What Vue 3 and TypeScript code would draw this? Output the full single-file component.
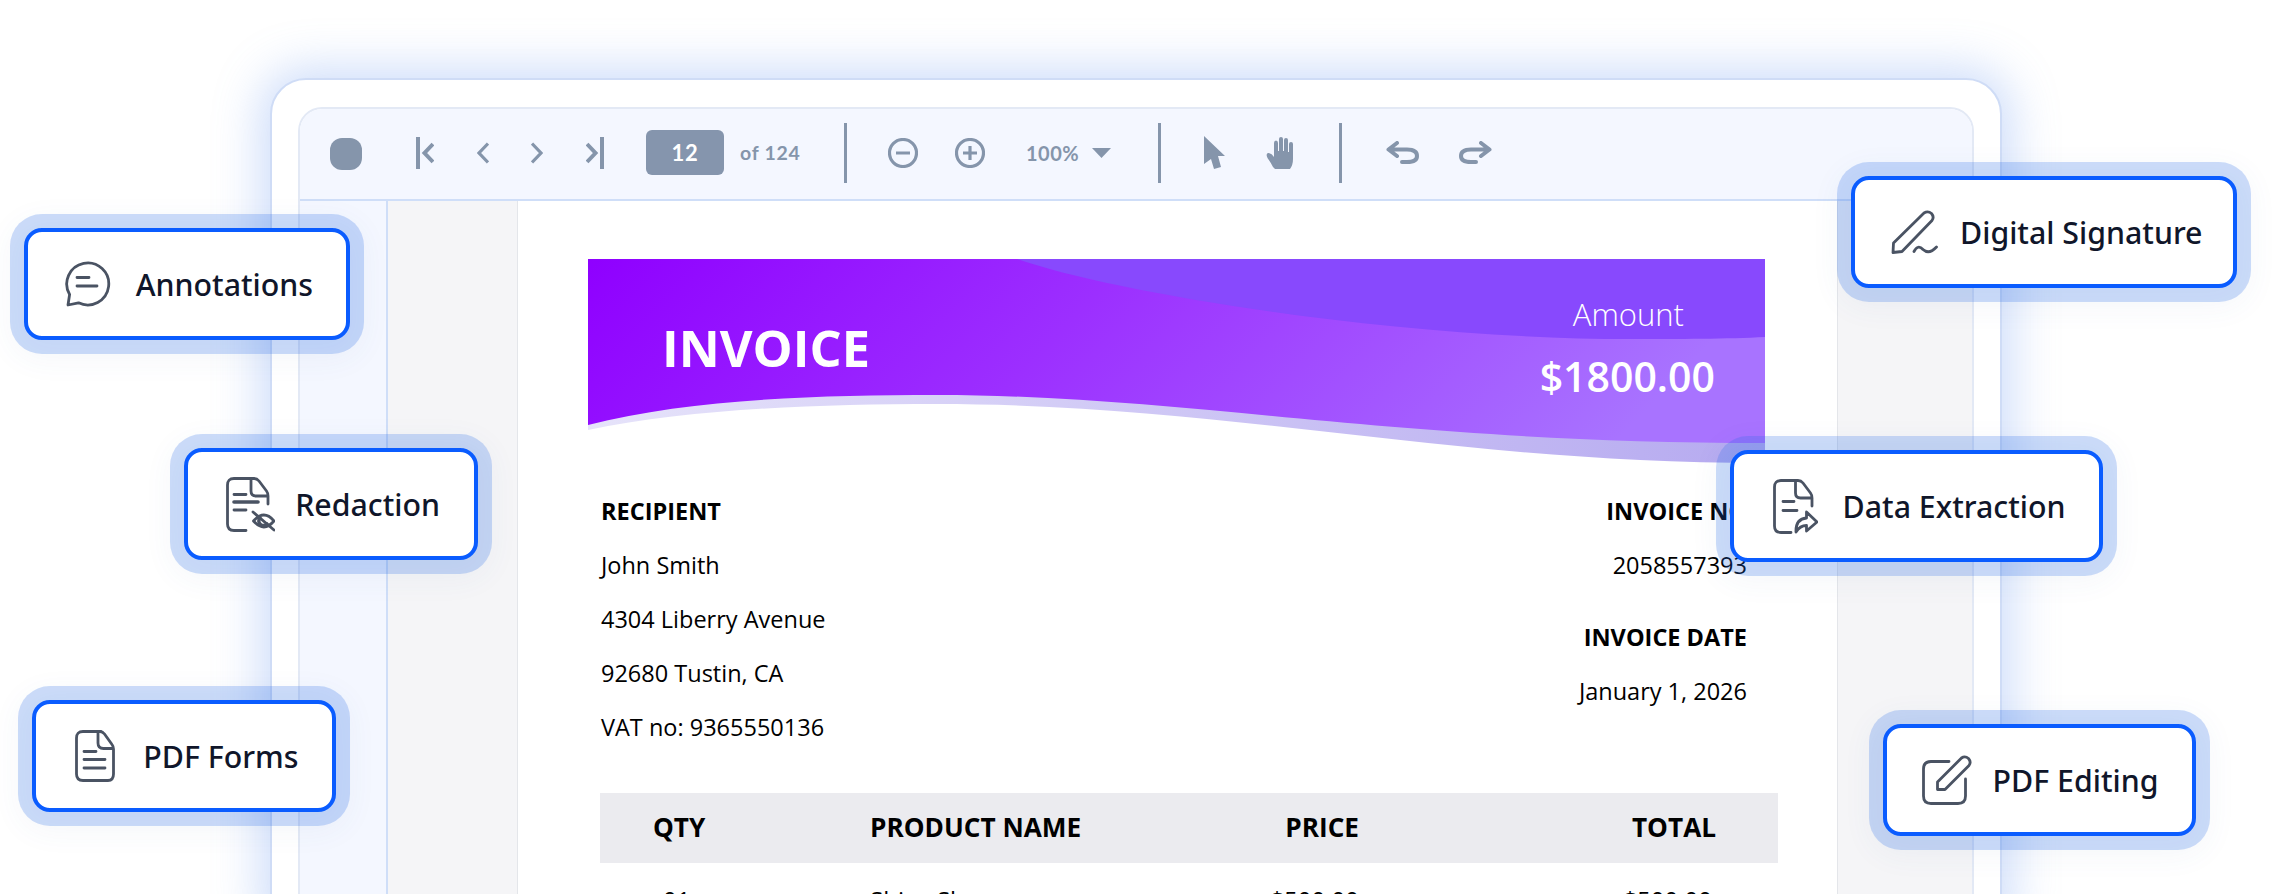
<script setup lang="ts">
interface Shape { d: string; w?: number }
interface Chip {
  label: string; left: number; top: number; width: number; pad: number; gap: number;
  icon: { w: number; h: number; paths: Shape[] };
}
const docBody = 'M27 1.5H8Q1.5 1.5 1.5 8V47Q1.5 53.5 8 53.5H20';
const chips: Chip[] = [
  { label: 'Annotations', left: 24, top: 228, width: 326, pad: 33, gap: 25, icon: { w: 46, h: 46, paths: [
    { d: 'M3 44L4.6 33.500A21 21 0 1 1 13.500 41.800Z' }, { d: 'M12 16.500H24M12 25H32' } ] } },
  { label: 'Redaction', left: 184, top: 448, width: 294, pad: 34, gap: 20, icon: { w: 49, h: 55, paths: [
    { d: docBody }, { d: 'M25 1.500V14Q25 19 30 19H42V27M25 1.500H28Q31 1.500 33 4L40.500 14Q42 16 42 19' },
    { d: 'M8 17.500H20M8 33H20' }, { d: 'M8 25H32', w: 3.6 },
    { d: 'M27.500 44Q38 32 48 44Q38 56 27.500 44Z' }, { d: 'M27 35L48 53' }, { d: 'M34 41A4.500 4.500 0 0 0 41 47', w: 3.6 } ] } },
  { label: 'PDF Forms', left: 32, top: 700, width: 304, pad: 33.5, gap: 28, icon: { w: 40, h: 52, paths: [
    { d: 'M26 1.500H8Q1.500 1.500 1.500 8V44Q1.500 50.500 8 50.500H33Q38.500 50.500 38.500 44V19Q38.500 16.500 37 14.500L29.500 4Q27.500 1.500 25 1.500M23 2V13Q23 18.500 28.500 18.500H38' },
    { d: 'M9 21.500H21M9 29.500H30M9 38H30' } ] } },
  { label: 'Digital Signature', left: 1851, top: 176, width: 386, pad: 30.5, gap: 22, icon: { w: 47, h: 45, paths: [
    { d: 'M2 42.500L2.500 33L33 3Q37 .5 40.500 3.500Q43.500 7 41 10.500L11 41.500Z' }, { d: 'M23 41.500Q27 34 32 39.500Q38 45 45.500 37' } ] } },
  { label: 'Data Extraction', left: 1730, top: 450, width: 373, pad: 33.5, gap: 25, icon: { w: 45, h: 55, paths: [
    { d: 'M22 1.500H8Q1.500 1.500 1.500 8V47Q1.500 53.500 8 53.500H18' },
    { d: 'M22.500 1.500V14Q22.500 19 27.500 19H39V27M22.500 1.500H25Q28 1.500 30 4L37.500 14Q39 16 39 19' },
    { d: 'M10 22.500H21M10 31.500H24' }, { d: 'M33.500 33L44 43L33.500 52V46.500Q27 46.500 23 53Q22.500 40 33.500 39Z' } ] } },
  { label: 'PDF Editing', left: 1883, top: 724, width: 313, pad: 33.5, gap: 21, icon: { w: 50, h: 50, paths: [
    { d: 'M27 6.500H9Q1.500 6.500 1.500 14V41Q1.500 48.500 9 48.500H36Q43.500 48.500 43.500 41V24' },
    { d: 'M15.500 34.500V27L39.500 3Q43 .5 46.500 3.500Q49.500 7 47 10.500L23 34.500Z' } ] } },
];
const info = ['John Smith', '4304 Liberry Avenue', '92680 Tustin, CA', 'VAT no: 9365550136'];
</script>

<template>
  <main class="stage">
    <section class="frame">
      <div class="viewer">
        <header class="toolbar">
          <span class="blob"></span>
          <svg class="t-first" width="18" height="32" viewBox="0 0 18 32"><path d="M2 0V32M17 7L8.500 16L17 25" /></svg>
          <svg class="t-prev" width="12" height="22" viewBox="0 0 12 22"><path d="M11 1.500L2 11L11 20.500" /></svg>
          <svg class="t-next" width="12" height="22" viewBox="0 0 12 22"><path d="M1 1.500L10 11L1 20.500" /></svg>
          <svg class="t-last" width="18" height="32" viewBox="0 0 18 32"><path d="M16 0V32M1 7L9.500 16L1 25" /></svg>
          <span class="page-box">12</span>
          <span class="of">of 124</span>
          <i class="sep s1"></i>
          <svg class="t-minus" width="30" height="30" viewBox="0 0 30 30"><circle cx="15" cy="15" r="13.500" /><path d="M8 15H22" /></svg>
          <svg class="t-plus" width="30" height="30" viewBox="0 0 30 30"><circle cx="15" cy="15" r="13.500" /><path d="M8 15H22M15 8V22" /></svg>
          <span class="zoom">100%</span>
          <svg class="t-caret" width="19" height="10" viewBox="0 0 19 10"><path class="solid" d="M0 0H19L9.500 10Z" /></svg>
          <i class="sep s2"></i>
          <svg class="t-cursor" width="23" height="33" viewBox="0 0 23 33"><path class="solid" d="M1 0L22 20L15 20L18 31L11 33L8 23L1 28Z" /></svg>
          <svg class="t-hand" width="30" height="33" viewBox="0 0 30 33"><path class="solid" d="M7 31Q5 27 1.500 22Q-.5 18 2 17Q4.500 16.500 8 21V7Q8 4.500 10 4.500Q12 4.500 12 7V15H13V3Q13 1 15 1Q17 1 17 3V15H18V4Q18 2 20 2Q22 2 22 4V16H23V8Q23 6 25 6Q27 6 27 8V23Q27 29 24 33H9Z" /></svg>
          <i class="sep s3"></i>
          <svg class="t-undo" width="34" height="23" viewBox="0 0 34 23"><path class="arrow" d="M11 2L2.500 8.500L11 15M3 8.500H21Q31 8.500 31 15Q31 21 21 21H16" /></svg>
          <svg class="t-redo" width="34" height="23" viewBox="0 0 34 23"><path class="arrow" d="M23 2L31.500 8.500L23 15M31 8.500H13Q3 8.500 3 15Q3 21 13 21H18" /></svg>
        </header>
        <div class="workspace">
          <aside class="rail"></aside>
          <aside class="thumbs"></aside>
          <article class="sheet">
            <div class="banner">
              <svg class="wave" width="1177" height="206" viewBox="0 0 1177 206" preserveAspectRatio="none">
                <defs>
                  <linearGradient id="mainG" x1="0" y1="0" x2="1" y2="0.15">
                    <stop offset="0" stop-color="#8f00ff" />
                    <stop offset="0.45" stop-color="#9c2fff" />
                    <stop offset="1" stop-color="#a873ff" />
                  </linearGradient>
                  <linearGradient id="bandG" x1="0" y1="0" x2="1" y2="0">
                    <stop offset="0" stop-color="#e6e3fa" />
                    <stop offset="1" stop-color="#b6aaf0" />
                  </linearGradient>
                </defs>
                <path fill="url(#bandG)" d="M0 171C100 150 230 145 348 145C640 145 860 204 1177 204V100H0Z" />
                <path fill="url(#mainG)" d="M0 166C100 140 230 136 348 136C600 136 800 184 1177 184V0H0Z" />
                <path fill="#8849fd" d="M429 0C530 35 810 80 1044 80C1090 80 1140 80 1177 78V0Z" />
              </svg>
              <h1 class="title">INVOICE</h1>
              <div class="amount">
                <span class="amount-label">Amount</span>
                <strong class="amount-value">$1800.00</strong>
              </div>
            </div>
            <div class="parties">
              <div class="party">
                <h2>RECIPIENT</h2>
                <p v-for="line in info" :key="line">{{ line }}</p>
              </div>
              <div class="party right">
                <h2>INVOICE NO</h2>
                <p>2058557393</p>
                <h2 class="second">INVOICE DATE</h2>
                <p>January 1, 2026</p>
              </div>
            </div>
            <div class="table-head">
              <span class="c1">QTY</span><span class="c2">PRODUCT NAME</span><span class="c3">PRICE</span><span class="c4">TOTAL</span>
            </div>
            <div class="table-row">
              <span class="c1">01</span><span class="c2">Shiny Shoes</span><span class="c3">$500.00</span><span class="c4">$500.00</span>
            </div>
          </article>
          <aside class="thumbs-r"></aside>
        </div>
      </div>
    </section>
    <div v-for="c in chips" :key="c.label" class="chip"
      :style="{ left: c.left + 'px', top: c.top + 'px', width: c.width + 'px', paddingRight: c.pad + 'px', columnGap: c.gap + 'px' }">
      <svg :width="c.icon.w" :height="c.icon.h" :viewBox="`0 0 ${c.icon.w} ${c.icon.h}`">
        <path v-for="(p, i) in c.icon.paths" :key="i" :d="p.d" :stroke-width="p.w || 2.8" />
      </svg>
      <span class="chip-label">{{ c.label }}</span>
    </div>
  </main>
</template>

<style>
html, body { margin: 0; background: #fff; }
</style>

<style scoped>
.stage {
  position: relative;
  width: 2280px;
  height: 894px;
  overflow: hidden;
  background: #fff;
  padding: 78px 278px 0 270px;
  box-sizing: border-box;
  font-family: "Open Sans", "Noto Sans", sans-serif;
  color: #000;
}
.frame {
  height: 860px;
  box-sizing: border-box;
  border: 2px solid #cfdcf6;
  border-radius: 36px;
  background: #fff;
  padding: 27px 26px 0 26px;
  box-shadow: 0 0 46px 10px rgba(110, 155, 240, .34);
}
.viewer {
  height: 840px;
  box-sizing: border-box;
  border: 2px solid #e3e9f5;
  border-bottom: 0;
  border-radius: 24px 24px 0 0;
  overflow: hidden;
}
.toolbar {
  height: 92px;
  box-sizing: border-box;
  display: flex;
  align-items: center;
  padding: 0 0 3px 30px;
  background: #f4f7ff;
  border-bottom: 2px solid #cfdef8;
}
.toolbar svg { flex: none; }
.toolbar path, .toolbar circle { fill: none; stroke: #8595ab; stroke-width: 3.2; }
.toolbar path.solid { fill: #8595ab; stroke: none; }
.toolbar path.arrow { stroke-width: 4; stroke-linecap: round; stroke-linejoin: round; }
.t-first path, .t-last path { stroke-width: 4; }
.blob { width: 32px; height: 32px; border-radius: 12px; background: #8595ab; margin-top: 3px; }
.t-first { margin-left: 54px; }
.t-prev { margin-left: 43px; }
.t-next { margin-left: 42px; }
.t-last { margin-left: 43px; }
.page-box {
  margin-left: 42px; width: 78px; height: 45px; border-radius: 6px; background: #8595ad;
  color: #fff; font: 700 22px/45px "Lato", sans-serif; text-align: center; letter-spacing: .8px;
}
.of { margin-left: 16px; width: 60px; color: #8595ab; font: 700 19.5px/1 "Lato", sans-serif; letter-spacing: .7px; white-space: nowrap; }
.sep { width: 3px; height: 60px; background: #8595ab; flex: none; }
.s1 { margin-left: 44px; }
.t-minus { margin-left: 41px; }
.t-plus { margin-left: 37px; }
.zoom { margin-left: 41px; width: 54px; color: #8595ab; font: 700 20px/1 "Lato", sans-serif; letter-spacing: .5px; }
.t-caret { margin-left: 12px; }
.s2 { margin-left: 47px; }
.t-cursor { margin-left: 42px; }
.t-hand { margin-left: 40px; }
.s3 { margin-left: 43px; }
.t-undo { margin-left: 44px; }
.t-redo { margin-left: 38px; }
.workspace { display: grid; grid-template-columns: 88px 130px 1319px 135px; height: 746px; }
.rail { background: #f4f7ff; border-right: 2px solid #cfdef8; }
.thumbs { background: #f5f5f7; border-right: 1px solid #e4e6ea; }
.thumbs-r { background: #f5f5f7; border-left: 1px solid #e4e6ea; }
.sheet { background: #fff; padding: 58px 0 0 70px; box-sizing: border-box; }
.banner {
  position: relative;
  width: 1177px;
  height: 206px;
  box-sizing: border-box;
  display: flex;
  justify-content: space-between;
  color: #fff;
}
.wave { position: absolute; left: 0; top: 0; }
.title { position: relative; margin: 64px 0 0 74px; font-size: 50.5px; line-height: 1; font-weight: 700; }
.amount { position: relative; display: flex; flex-direction: column; align-items: flex-end; margin-right: 50px; padding-top: 35px; }
.amount-label { font-size: 31px; line-height: 40px; font-weight: 300; margin-right: 31px; }
.amount-value { font-size: 41px; line-height: 54px; font-weight: 600; margin-top: 15px; }
.parties { display: flex; justify-content: space-between; width: 1146px; margin: 19px 0 0 13px; height: 309px; }
.party h2 { margin: 0; font-size: 23.5px; line-height: 54px; font-weight: 700; }
.party p { margin: 0; font-size: 23.5px; line-height: 54px; }
.party.right { text-align: right; }
.party.right .second { margin-top: 18px; }
.table-head, .table-row {
  display: grid;
  grid-template-columns: 270px 300px 189px 419px;
  width: 1178px;
  margin-left: 12px;
}
.table-head { height: 70px; line-height: 69px; font-size: 26.2px; font-weight: 700; background: #ebebef; }
.table-row { margin-top: 19px; line-height: 36px; font-size: 24px; }
.c1 { padding-left: 53px; }
.table-row .c1 { padding-left: 63px; }
.c3, .c4 { text-align: right; }
.c4 { padding-right: 62px; }
.table-row .c4 { padding-right: 66px; }
.chip {
  position: absolute;
  height: 112px;
  box-sizing: border-box;
  display: flex;
  align-items: center;
  justify-content: flex-end;
  background: #fff;
  border: 4px solid #0a5cff;
  border-radius: 18px;
  box-shadow: 0 0 0 14px rgba(40, 110, 235, .23), 0 6px 30px 14px rgba(60, 90, 150, .05);
  color: #10162a;
  font: 500 30.3px/1 "Noto Sans", sans-serif;
  white-space: nowrap;
  z-index: 2;
}
.chip-label { padding-top: 2px; }
.chip path { fill: none; stroke: #4a5363; stroke-linecap: round; stroke-linejoin: round; }
</style>
